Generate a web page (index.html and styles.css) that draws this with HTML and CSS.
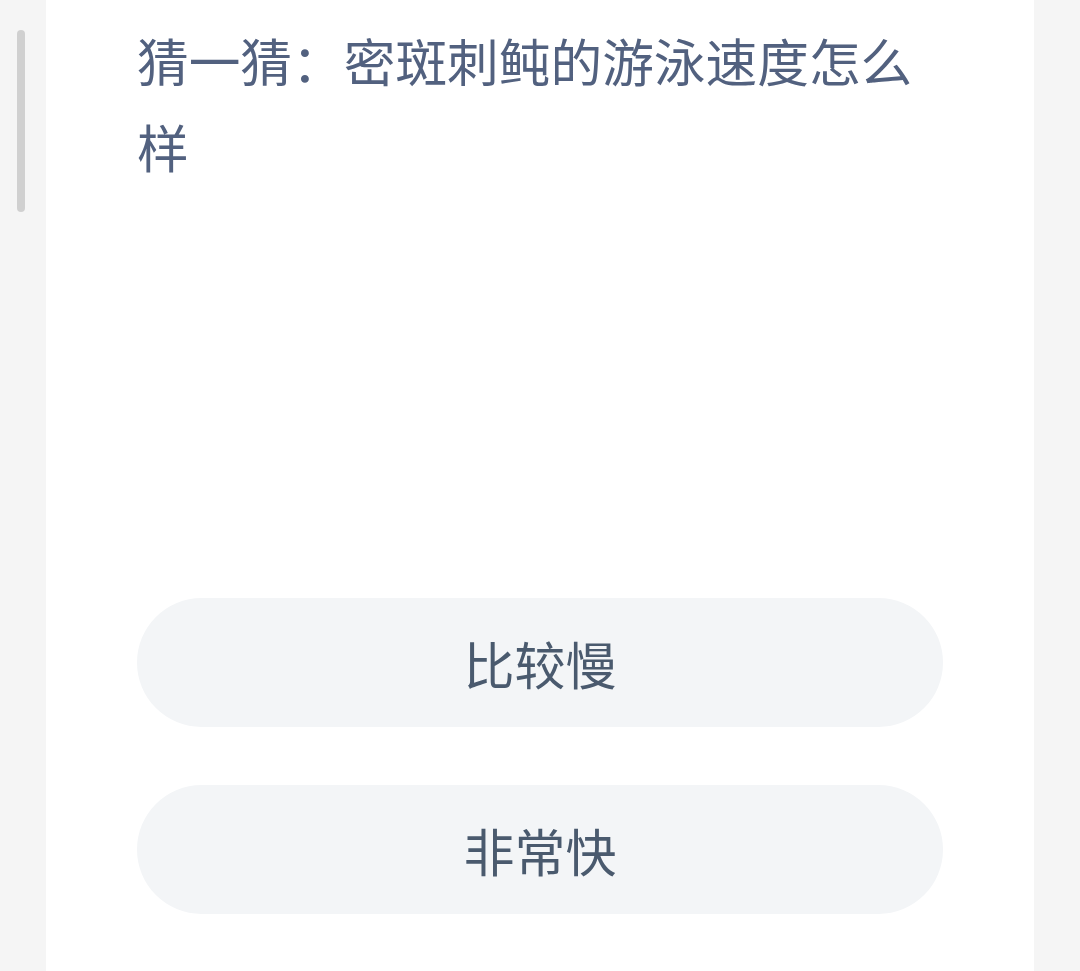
FILE: index.html
```html
<!DOCTYPE html>
<html lang="zh-CN">
<head>
  <meta charset="UTF-8">
  <meta name="viewport" content="width=device-width, initial-scale=1.0">
  <title>猜一猜</title>
  <link rel="stylesheet" href="styles.css">
</head>
<body>
  <div class="scrollbar"></div>
  <div class="quiz-card">
    <h1 class="question">猜一猜：密斑刺鲀的游泳速度怎么样</h1>
    <div class="options">
      <button class="option">比较慢</button>
      <button class="option">非常快</button>
    </div>
  </div>
</body>
</html>
```

FILE: styles.css
```css
html, body {
  margin: 0;
  height: 100%;
  background-color: #f5f5f5;
  overflow: hidden;
}

body {
  position: relative;
  font-family: "Noto Sans CJK SC", "Noto Sans", sans-serif;
}

.scrollbar {
  position: absolute;
  left: 17px;
  top: 30px;
  width: 8px;
  height: 182px;
  border-radius: 4px;
  background-color: #d0d0d0;
}

.quiz-card {
  margin: 0 46px;
  height: 100%;
  padding: 17px 91px 0 91px;
  box-sizing: border-box;
  background-color: #ffffff;
}

.question {
  margin: 0;
  font-size: 51.7px;
  font-weight: 400;
  line-height: 86px;
  color: #52617f;
  padding-right: 20px;
}

.options {
  margin-top: 409px;
  display: flex;
  flex-direction: column;
  gap: 58px;
}

.option {
  width: 100%;
  height: 129px;
  border: none;
  border-radius: 65px;
  background-color: #f3f5f7;
  color: #4a5a6e;
  font-family: "Noto Sans CJK SC", "Noto Sans", sans-serif;
  font-size: 51px;
  font-weight: 400;
  cursor: pointer;
}
```
